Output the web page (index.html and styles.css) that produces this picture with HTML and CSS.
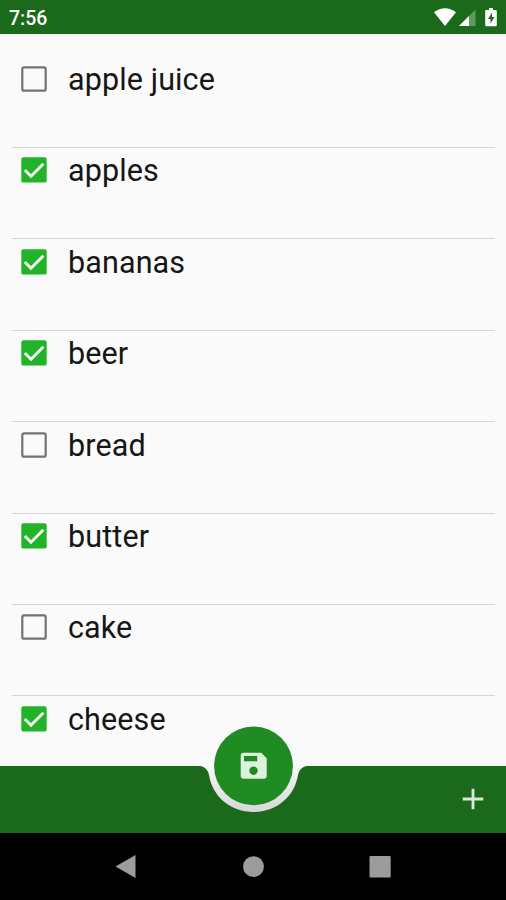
FILE: index.html
```html
<!DOCTYPE html>
<html lang="en">
<head>
<meta charset="utf-8">
<title>Shopping list</title>
<link rel="stylesheet" href="styles.css">
</head>
<body>
<svg class="defs" width="0" height="0" aria-hidden="true">
  <symbol id="off" viewBox="0 0 26 26"><rect x="1.3" y="1.3" width="23.4" height="23.4" rx="1.8" fill="none" stroke="#737373" stroke-width="2.2"/></symbol>
  <symbol id="on" viewBox="0 0 26 26"><rect x=".3" y=".2" width="25.4" height="25.4" rx="2.2" fill="#22b428"/><path d="M3.8 13 10 19.2 22.4 6.8" fill="none" stroke="#fafafa" stroke-width="2.9"/></symbol>
</svg>
<div class="screen">
  <header class="status">
    <span class="time">7:56</span>
    <svg class="indicators" width="66" height="22" viewBox="0 0 66 22">
      <path d="M0 5.2Q11 -2.6 22 5.2L11 19Z" fill="#fff"/>
      <path d="M41.500 2.5V19H25Z" fill="#5c995c"/>
      <path d="M35 9V19H25Z" fill="#fff"/>
      <path d="M55 1h4v2h2.5q1.3 0 1.3 1.3V18q0 1.3-1.3 1.3h-9q-1.3 0-1.3-1.3V4.3q0-1.3 1.3-1.3H55Z" fill="#fff"/>
      <path d="M58 5.5 54 12h2.5v4.5l4-6.500H58Z" fill="#1b6a1b"/>
    </svg>
  </header>
  <main class="list">
    <div class="row"><svg class="box"><use href="#off"/></svg><span>apple juice</span></div>
    <div class="row"><svg class="box"><use href="#on"/></svg><span>apples</span></div>
    <div class="row"><svg class="box"><use href="#on"/></svg><span>bananas</span></div>
    <div class="row"><svg class="box"><use href="#on"/></svg><span>beer</span></div>
    <div class="row"><svg class="box"><use href="#off"/></svg><span>bread</span></div>
    <div class="row"><svg class="box"><use href="#on"/></svg><span>butter</span></div>
    <div class="row"><svg class="box"><use href="#off"/></svg><span>cake</span></div>
    <div class="row"><svg class="box"><use href="#on"/></svg><span>cheese</span></div>
  </main>
  <footer class="bar">
    <svg class="notch" width="124" height="92" viewBox="0 0 124 92">
      <defs>
        <linearGradient id="shade" x1="0" y1="0" x2="0" y2="1"><stop offset="0" stop-color="#fafafa"/><stop offset=".4" stop-color="#e9e9e9"/><stop offset="1" stop-color="#d8d8d8"/></linearGradient>
      </defs>
      <path d="M6.5 44.8C12 45 15.500 48 17 54C20.5 76 39 91 61.5 91S102.5 76 106 54C107.5 48 111 45 116.5 44.8Z" fill="url(#shade)"/>
      <circle cx="61.5" cy="44.900" r="39.4" fill="#1f8b22"/>
      <path transform="translate(-.3 -.7)" fill-rule="evenodd" fill="#dcf2dc" d="M52 32.5H69.5L75 38V55.5Q75 58.5 72 58.5H52Q49 58.5 49 55.5V35.5Q49 32.5 52 32.5ZM52.3 35.7V41H65.5V35.7ZM61.8 46.2a4.2 4.2 0 1 0 .01 0Z"/>
    </svg>
    <svg class="plus" width="22" height="22" viewBox="0 0 22 22"><path d="M11 .7V21.3M.7 11H21.3" stroke="#d9ead9" stroke-width="2.8"/></svg>
  </footer>
  <nav class="nav">
    <svg width="26" height="26" viewBox="0 0 26 26"><path d="M2.5 12.5 22.500 1V24Z"/></svg>
    <svg width="26" height="26" viewBox="0 0 26 26"><circle cx="13.5" cy="12.7" r="10.4"/></svg>
    <svg width="26" height="26" viewBox="0 0 26 26"><rect x="2.500" y="2" width="21.2" height="21.4" rx="1"/></svg>
  </nav>
</div>
</body>
</html>
```
FILE: styles.css
```css
body {
  margin: 0;
  font-family: Roboto, "Liberation Sans", sans-serif;
}

.defs {
  position: absolute;
}

.screen {
  display: flex;
  flex-direction: column;
  width: 506px;
  height: 900px;
  overflow: hidden;
  background: #fafafa;
}

.status {
  display: flex;
  flex: none;
  align-items: center;
  justify-content: space-between;
  box-sizing: border-box;
  height: 34px;
  padding: 2px 6px 0 9px;
  background: #1b6a1b;
  color: #fff;
}

.time {
  font-size: 19.5px;
  font-weight: 500;
}

.list {
  flex: 1;
  min-height: 0;
  padding: 22.6px 11px 0 12px;
  overflow: hidden;
}

.row {
  display: flex;
  align-items: flex-start;
  gap: 21px;
  box-sizing: border-box;
  height: 91.4px;
  padding: 9.5px 0 0 9px;
  border-bottom: 1px solid #d6d6d6;
  color: #161616;
  font-size: 30.5px;
  line-height: 28px;
  letter-spacing: 0.12px;
}

.box {
  flex: none;
  width: 26px;
  height: 26px;
}

.bar {
  position: relative;
  display: flex;
  flex: none;
  align-items: center;
  justify-content: flex-end;
  box-sizing: border-box;
  height: 67.5px;
  padding-right: 22px;
  background: #1b6a1b;
}

.notch {
  position: absolute;
  top: -45px;
  left: 192px;
}

.nav {
  display: flex;
  flex: none;
  align-items: center;
  justify-content: space-between;
  box-sizing: border-box;
  height: 67px;
  padding: 0 113.5px 0 113px;
  background: #000;
  fill: #9c9c9c;
}
```
